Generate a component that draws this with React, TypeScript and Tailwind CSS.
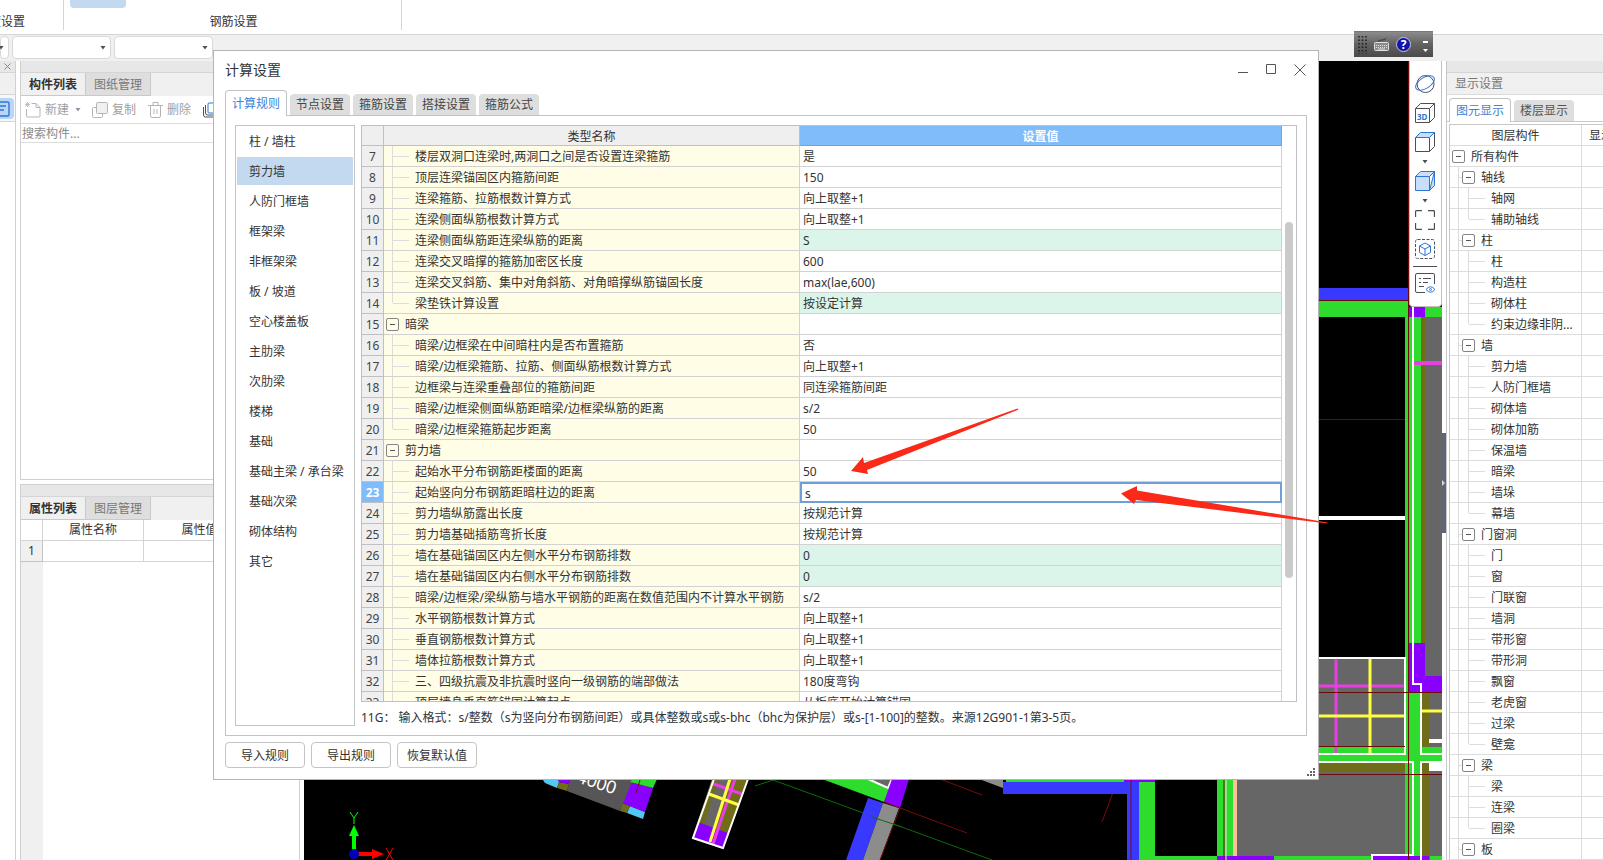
import type { ReactNode } from "react";

type Row = { no: number; name: string; value?: string; group?: boolean; last?: boolean; mark?: boolean };

const rows: Row[] = [
  { no: 7, name: "楼层双洞口连梁时,两洞口之间是否设置连梁箍筋", value: "是" },
  { no: 8, name: "顶层连梁锚固区内箍筋间距", value: "150" },
  { no: 9, name: "连梁箍筋、拉筋根数计算方式", value: "向上取整+1" },
  { no: 10, name: "连梁侧面纵筋根数计算方式", value: "向上取整+1" },
  { no: 11, name: "连梁侧面纵筋距连梁纵筋的距离", value: "S", mark: true },
  { no: 12, name: "连梁交叉暗撑的箍筋加密区长度", value: "600" },
  { no: 13, name: "连梁交叉斜筋、集中对角斜筋、对角暗撑纵筋锚固长度", value: "max(lae,600)" },
  { no: 14, name: "梁垫铁计算设置", value: "按设定计算", mark: true, last: true },
  { no: 15, name: "暗梁", group: true },
  { no: 16, name: "暗梁/边框梁在中间暗柱内是否布置箍筋", value: "否" },
  { no: 17, name: "暗梁/边框梁箍筋、拉筋、侧面纵筋根数计算方式", value: "向上取整+1" },
  { no: 18, name: "边框梁与连梁重叠部位的箍筋间距", value: "同连梁箍筋间距" },
  { no: 19, name: "暗梁/边框梁侧面纵筋距暗梁/边框梁纵筋的距离", value: "s/2" },
  { no: 20, name: "暗梁/边框梁箍筋起步距离", value: "50", last: true },
  { no: 21, name: "剪力墙", group: true },
  { no: 22, name: "起始水平分布钢筋距楼面的距离", value: "50" },
  { no: 23, name: "起始竖向分布钢筋距暗柱边的距离", value: "s" },
  { no: 24, name: "剪力墙纵筋露出长度", value: "按规范计算" },
  { no: 25, name: "剪力墙基础插筋弯折长度", value: "按规范计算" },
  { no: 26, name: "墙在基础锚固区内左侧水平分布钢筋排数", value: "0", mark: true },
  { no: 27, name: "墙在基础锚固区内右侧水平分布钢筋排数", value: "0", mark: true },
  { no: 28, name: "暗梁/边框梁/梁纵筋与墙水平钢筋的距离在数值范围内不计算水平钢筋", value: "s/2" },
  { no: 29, name: "水平钢筋根数计算方式", value: "向上取整+1" },
  { no: 30, name: "垂直钢筋根数计算方式", value: "向上取整+1" },
  { no: 31, name: "墙体拉筋根数计算方式", value: "向上取整+1" },
  { no: 32, name: "三、四级抗震及非抗震时竖向一级钢筋的端部做法", value: "180度弯钩" },
  { no: 33, name: "顶层墙身垂直筋锚固计算起点", value: "从板底开始计算锚固" },
];

const ACTIVE_ROW = 23;

const categories = [
  "柱 / 墙柱",
  "剪力墙",
  "人防门框墙",
  "框架梁",
  "非框架梁",
  "板 / 坡道",
  "空心楼盖板",
  "主肋梁",
  "次肋梁",
  "楼梯",
  "基础",
  "基础主梁 / 承台梁",
  "基础次梁",
  "砌体结构",
  "其它",
];

const dialogTabs = ["计算规则", "节点设置", "箍筋设置", "搭接设置", "箍筋公式"];

const layers = [
  { name: "轴线", items: ["轴网", "辅助轴线"] },
  { name: "柱", items: ["柱", "构造柱", "砌体柱", "约束边缘非阴..."] },
  { name: "墙", items: ["剪力墙", "人防门框墙", "砌体墙", "砌体加筋", "保温墙", "暗梁", "墙垛", "幕墙"] },
  { name: "门窗洞", items: ["门", "窗", "门联窗", "墙洞", "带形窗", "带形洞", "飘窗", "老虎窗", "过梁", "壁龛"] },
  { name: "梁", items: ["梁", "连梁", "圈梁"] },
  { name: "板", items: [] },
];

function Caret({ className = "" }: { className?: string }) {
  return (
    <svg width="6" height="4" viewBox="0 0 6 4" className={className} aria-hidden="true">
      <path d="M.5 0h5L3 3.500z" fill="#4b5058" />
    </svg>
  );
}

function ToggleBox() {
  return (
    <button
      aria-label="折叠"
      className="flex size-[13px] shrink-0 items-center justify-center rounded-[2px] border border-[#858585]"
    >
      <span className="h-px w-[5px] bg-[#555]" />
    </button>
  );
}

function Branch({ last }: { last?: boolean }) {
  return (
    <>
      <span className={`w-px shrink-0 self-start bg-[#dcdcdc] ${last ? "h-1/2" : "h-full"}`} />
      <span className="h-px w-4 shrink-0 bg-[#dcdcdc]" />
    </>
  );
}

function Ribbon() {
  return (
    <header className="flex h-[35px] shrink-0 border-b border-[#d5d5d5] bg-white leading-4">
      <div className="mb-1 flex w-16 items-end justify-end overflow-hidden border-r border-[#d5d5d5] pr-[38px]">
        <span className="whitespace-nowrap">度设置</span>
      </div>
      <div className="mb-1 flex w-[338px] flex-col justify-between border-r border-[#d5d5d5]">
        <button aria-label="计算设置" className="ml-1.5 h-2 w-14 rounded-b bg-[#c2d9f0]" />
        <span className="pl-0.5 text-center">钢筋设置</span>
      </div>
    </header>
  );
}

function Combo({ label, className }: { label: string; className: string }) {
  return (
    <div className={`relative h-[23px] ${className}`}>
      <select aria-label={label} className="size-full appearance-none rounded border border-[#d9d9d9] bg-white" />
      <Caret className="pointer-events-none absolute right-[5px] top-[10px]" />
    </div>
  );
}

function DockTabs({ tabs }: { tabs: [string, string] }) {
  return (
    <>
      <div className="h-3 shrink-0 border-b border-[#d5d5d5] bg-[#e7e7e7]" />
      <div role="tablist" className="flex h-[23px] shrink-0 bg-[#f0f0f0]">
        <button role="tab" aria-selected="true" className="w-[65px] border-r border-b border-[#c9c9c9] bg-[#f0f0f0] pt-px font-bold">
          {tabs[0]}
        </button>
        <button role="tab" aria-selected="false" className="w-[65px] border-r border-b border-[#c9c9c9] bg-[#dedede] pt-px text-[#777]">
          {tabs[1]}
        </button>
      </div>
    </>
  );
}

function LeftDock() {
  return (
    <aside className="flex w-[304px] shrink-0 bg-white">
      <div className="mr-1 flex w-4 shrink-0 flex-col border-r border-[#d0d0d0]">
        <div className="flex h-3 items-center justify-center border-b border-[#d5d5d5] bg-[#e7e7e7]">
          <button aria-label="关闭">
            <svg width="7" height="7" viewBox="0 0 7 7" stroke="#8a8a8a">
              <path d="M.5.5l6 6M6.500.5l-6 6" />
            </svg>
          </button>
        </div>
        <div className="h-[22px] border-b border-[#d5d5d5] bg-[#f0f0f0]" />
        <div className="h-[27px] border-b border-[#d5d5d5] bg-[#f7f7f7] pt-[3px]">
          <button aria-label="列表" className="flex h-[21px] w-[14px] items-center rounded-r bg-[#b9d6f8]">
            <svg width="10" height="16" viewBox="0 0 10 16" fill="none" stroke="#2f76d2" strokeWidth="1.4">
              <path d="M0 1h7.500q1.500 0 1.500 1.500v11q0 1.500-1.500 1.500H0M0 5h6M0 9h4" />
            </svg>
          </button>
        </div>
      </div>

      <div className="flex min-w-0 flex-1 flex-col">
        <section className="flex h-[419px] shrink-0 flex-col border border-t-0 border-[#d0d0d0]">
          <DockTabs tabs={["构件列表", "图纸管理"]} />
          <div className="flex h-7 shrink-0 items-center border-b border-[#dcdcdc] pl-1 text-[#a0a0a0]">
            <button className="flex items-center gap-1 pt-px">
              <svg width="16" height="16" viewBox="0 0 16 16" fill="none" stroke="#b5b5b5">
                <path d="M6.500 1.500H11l4 4v8.500q0 1-1 1H2.500q-1 0-1-1V7M11 1.500v4h4" />
                <path d="M2.500 0v5M0 2.500h5M.5.5l4 4M4.500.5l-4 4" strokeWidth=".8" />
              </svg>
              新建
              <Caret className="ml-0.5 opacity-60" />
            </button>
            <button className="ml-[11px] flex items-center gap-1 pt-px">
              <svg width="16" height="16" viewBox="0 0 16 16" stroke="#b5b5b5">
                <rect x=".5" y="5.500" width="10" height="10" rx="1" fill="#fff" />
                <rect x="4.500" y=".5" width="11" height="11" rx="1" fill="#f0f0f0" />
              </svg>
              复制
            </button>
            <button className="ml-3 flex items-center gap-1 pt-px">
              <svg width="15" height="16" viewBox="0 0 15 16" fill="none" stroke="#b5b5b5">
                <path d="M0 3.500h15M5 3.500v-3h5v3M2.500 3.500v10.500q0 1.500 1.500 1.500h7q1.500 0 1.500-1.500V3.500M6 7v5M9 7v5" />
              </svg>
              删除
            </button>
            <button aria-label="层间复制" className="ml-3">
              <svg width="16" height="16" viewBox="0 0 16 16" fill="none">
                <path d="M.5 5v8q0 2 2 2h8M2.500 3v8q0 2 2 2h8" stroke="#4b5058" />
                <rect x="5" y="1" width="10" height="10" rx="1" stroke="#2f76d2" />
              </svg>
            </button>
          </div>
          <input
            aria-label="搜索构件"
            placeholder="搜索构件..."
            className="h-[19px] shrink-0 border-b border-[#dcdcdc] px-px pt-px placeholder:text-[#8a8a8a] focus:outline-none"
          />
        </section>

        <section className="mt-1 flex min-h-0 flex-1 flex-col border-x border-t border-[#d0d0d0] bg-[linear-gradient(to_right,#f0f0f0_22px,#fff_22px)]">
          <DockTabs tabs={["属性列表", "图层管理"]} />
          <table className="w-full table-fixed border-separate border-spacing-0 bg-white text-center">
            <colgroup>
              <col className="w-[22px]" />
              <col className="w-[101px]" />
              <col className="w-[112px]" />
              <col />
            </colgroup>
            <tbody>
              <tr className="h-[21px]">
                <th className="border-r border-b border-[#d5d5d5]" />
                <th className="border-r border-b border-[#d5d5d5] font-normal">属性名称</th>
                <th className="border-r border-b border-[#d5d5d5] font-normal">属性值</th>
                <th className="border-b border-[#d5d5d5]" />
              </tr>
              <tr className="h-[21px]">
                <td className="border-r border-b border-[#c4c4c4] bg-[#f0f0f0]">1</td>
                <td className="border-r border-b border-[#d5d5d5]" />
                <td className="border-r border-b border-[#d5d5d5]" />
                <td className="border-b border-[#d5d5d5]" />
              </tr>
            </tbody>
          </table>
        </section>
      </div>
      <div className="w-1 shrink-0" />
    </aside>
  );
}

// Model view: walls, beams and columns drawn in drawing coordinates
function ModelView() {
  return (
    <svg
      viewBox="304 61 1138 799"
      preserveAspectRatio="xMaxYMax slice"
      className="absolute inset-0 size-full"
      aria-label="模型"
    >
      <rect x="304" y="61" width="1138" height="799" fill="#000" />

      {/* axis */}
      <path d="M352 850v-14h-3l5-11 5 11h-3v14z" fill="#0f0" />
      <path d="M358 852h14v-3l12 5-12 5v-3h-14z" fill="#f00" />
      <circle cx="354" cy="854" r="5" fill="#0000b8" />
      <path d="M350 812l4 6 4-6M354 818v6" stroke="#0f0" fill="none" />
      <path d="M386 848l7 12M393 848l-7 12" stroke="#f00" fill="none" />

      {/* tilted slab */}
      <path d="M543 780l2 3 12 5 2-6v-2zM630 806l15 6-2 7-16-6z" fill="#53c8f5" />
      <path d="M559 782l10 2-2 7-10-3zM622 803l8 3-3 7-7-2z" fill="#6f6d17" />
      <path d="M557 779h13l-1 5-10-2zM630 782l23 6-8 24-23-9z" fill="#8a00ff" />
      <path d="M570 779h63l-13 32-53-20z" fill="#575555" />
      <path d="M633 779h24l-4 9-23-6z" fill="#2ddc2d" />
      <path d="M640 780l-4 13" stroke="#7a0c0c" />
      <text transform="translate(576 782) rotate(18)" fontSize="18" fill="#fff" fontFamily="Liberation Sans, sans-serif">
        4000
      </text>

      {/* tilted column */}
      <path d="M692 838l31 11 25-70h-36z" fill="#6f6d17" />
      <path d="M718 779h12l-16 50-10-4z" fill="#666" />
      <path d="M698 822l30 11-5 16-31-11z" fill="#8a00ff" />
      <path d="M735 779l-22 65M711 783l31 11" stroke="#e840e0" strokeWidth="3" />
      <path d="M730 779l-20 63M709 794l30 11" stroke="#ffff40" strokeWidth="3" />
      <path d="M714 779l-21 59 30 10 25-69" stroke="#fff" strokeWidth="2" fill="none" />

      <path d="M755 786l18-6 219 80" stroke="#0b6b0b" fill="none" />
      <path d="M822 779h72l-10 23z" fill="#2ddc2d" />
      <path d="M868 779h24l-4 9z" fill="#666" stroke="#fff" strokeWidth="2" />
      <path d="M892 779h17l-9 29-16-6z" fill="#8a00ff" />
      <path d="M868 798l15 5-20 57h-17z" fill="#3838ff" />
      <path d="M883 803l16 5-19 52h-17z" fill="#8c8c8c" />
      <path d="M940 779l42 16M884 802l83 31M900 808l-20 52M1118 779l-16 43" stroke="#7a0c0c" fill="none" />
      <path d="M872 817l30 10" stroke="#0b6b0b" />

      {/* lower walls */}
      <path d="M979 779h24v9z" fill="#8c8c8c" />
      <path d="M1006 779h118v4h-118zM1139 782h16v78h-16zM1139 856h303v4h-303zM1217 779h16v81h-16z" fill="#2ddc2d" />
      <path d="M1124 779h31v3h-31zM1217 856h57v4h-57z" fill="#8a00ff" />
      <path d="M1003 782h136v78h-12v-66h-124z" fill="#3838ff" />
      <path d="M1131 779v81M1224 779v81" stroke="#7a0c0c" />
      <path d="M1226 779v81" stroke="#eee" />
      <path d="M1233 779h4v77h-4z" fill="#f7c29a" />
      <path d="M1237 763h168v93h-168z" fill="#666" />

      {/* upper right bay */}
      <path d="M1319 288h89v12h-89z" fill="#3838ff" />
      <path d="M1319 301h90v16h-90z" fill="#2ddc2d" />
      <path d="M1319 516h86v4h-86z" fill="#fff" />
      <path d="M1319 657h86v98h-86z" fill="#666" />
      <path d="M1319 747h123v14h-123z" fill="#2ddc2d" />
      <path d="M1319 763h86v8h-86z" fill="#6f6d17" />
      <path d="M1336 657v97M1319 686h86" stroke="#e840e0" strokeWidth="3" />
      <path d="M1370 657v97M1319 716h86" stroke="#ffff40" strokeWidth="3" />

      {/* right edge column */}
      <path d="M1405 307h37v553h-37z" fill="#2ddc2d" />
      <path d="M1421 317h4v360h-4zM1422 692h8v55h-8zM1422 763h8v97h-8z" fill="#6f6d17" />
      <path d="M1425 317h17v360h-17zM1429 692h13v55h-13zM1429 763h13v93h-13z" fill="#666" />
      <path d="M1409 307h16v10h-16zM1409 643h16v33h17v16h-33zM1372 856h57v4h-57z" fill="#8a00ff" />
      <path d="M1414 363h28" stroke="#e840e0" strokeWidth="4" />
      <path d="M1421 711h21" stroke="#ffff40" strokeWidth="3" />
      <path d="M1429 739h13v4h-13zM1429 763h13v8h-13z" fill="#fff" />
      <g fill="none" stroke="#fff" strokeWidth="2">
        <path d="M1319 658h86v96h-86" />
        <path d="M1413 307v377h8v70h21" />
        <path d="M1319 762h94v93h-41v5M1442 762h-21v98" />
      </g>
      <path d="M1408.500 61v799M1319 300.500h90M1319 692.500h123M1319 746.500h86M1319 774.500h123M1319 419.500h86" stroke="#6b0808" fill="none" />
    </svg>
  );
}

function ToolButton({ label, children }: { label: string; children: ReactNode }) {
  return (
    <button aria-label={label} className="size-5">
      <svg width="20" height="20" viewBox="0 0 20 20" fill="none" stroke="#4b5058" strokeLinejoin="round">
        {children}
      </svg>
    </button>
  );
}

function ViewTools() {
  return (
    <div className="absolute top-0 right-0 flex h-[246px] w-[33px] flex-col items-center gap-[9px] rounded-b border border-t-0 border-[#c9bcbc] bg-white pt-[13px] pr-px">
      <ToolButton label="动态观察">
        <circle cx="10.500" cy="10" r="8.500" />
        <ellipse cx="10" cy="9" rx="10.500" ry="5.500" transform="rotate(-32 10 9)" stroke="#2f76d2" />
      </ToolButton>
      <ToolButton label="三维">
        <path d="M.5 5.500h14V19.500H.5zM.5 5.500L5.500.5h14l-5 5M19.500.5v14l-5 5" />
        <text x="2" y="17" fontSize="8" fontWeight="bold" fill="#2f76d2" stroke="none">3D</text>
      </ToolButton>
      <div className="flex flex-col items-center">
        <ToolButton label="俯视">
          <path d="M.5 5.500v14h14v-14M19.500.5v14l-5 5" />
          <path d="M.5 5.500L5.500.5h14l-5 5z" fill="#c9defa" stroke="#2f76d2" />
        </ToolButton>
        <button aria-label="更多视图" className="flex h-[19px] items-center"><Caret /></button>
        <ToolButton label="实体">
          <path d="M.5 5.500h14V19.500H.5zM.5 5.500L5.500.5h14l-5 5M19.500.5v14l-5 5z" fill="#c9defa" stroke="#2f76d2" />
        </ToolButton>
        <button aria-label="更多显示" className="flex h-[19px] items-center"><Caret /></button>
        <ToolButton label="全屏">
          <path d="M.5 7V2Q.5.5 2 .5h5M13 .5h5q1.500 0 1.500 1.500v5M19.500 13v5q0 1.500-1.500 1.500h-5M7 19.500H2Q.5 19.500.5 18v-5" strokeWidth="1.300" />
        </ToolButton>
      </div>
      <div className="flex flex-col items-center">
        <ToolButton label="局部三维">
          <rect x=".5" y=".5" width="19" height="19" rx="2" strokeDasharray="3 1.500" />
          <path d="M10 4l5.500 3v6.500L10 16.500l-5.500-3V7zM4.500 7l5.500 3 5.500-3M10 10v6.500" stroke="#2f76d2" />
        </ToolButton>
        <span className="mt-[7px] mb-1.5 h-px w-6 bg-[#4b5058]" />
        <ToolButton label="显示设置">
          <path d="M10 19.500H2Q.5 19.500.5 18V2Q.5.5 2 .5h16q1.500 0 1.500 1.500v9M4 5.500h2M8 5.500h8M4 9.500h2M8 9.500h5M4 13.500h5" />
          <path d="M11 16.500q4.500-5.500 9 0-4.500 5.500-9 0z" stroke="#2f76d2" />
          <circle cx="15.500" cy="16.500" r="1" stroke="#2f76d2" />
        </ToolButton>
      </div>
    </div>
  );
}

function LayerRow({ children }: { children: ReactNode }) {
  return (
    <tr className="h-[21px]">
      <td className="border-r border-b border-[#dcdcdc] p-0">
        <div className="flex h-5 items-center whitespace-nowrap">{children}</div>
      </td>
      <td className="border-b border-[#dcdcdc]" />
    </tr>
  );
}

function DisplayPanel() {
  return (
    <aside className="flex w-[161px] shrink-0 bg-white">
      <button aria-label="收起面板" className="mt-[372px] flex h-[100px] w-1 shrink-0 items-center bg-[#5f6773]">
        <svg width="4" height="6" viewBox="0 0 4 6"><path d="M0 0l3 3-3 3z" fill="#d5dae0" /></svg>
      </button>
      <div className="flex min-w-0 flex-1 flex-col overflow-hidden border-l border-[#c4c8cc]">
        <div className="h-3 shrink-0 border-b border-[#d5d5d5] bg-[#e7e7e7]" />
        <h2 className="h-[22px] shrink-0 border-b border-[#dcdcdc] bg-[#f0f0f0] pl-2 leading-[21px] text-[#777]">显示设置</h2>
        <div role="tablist" className="flex h-[27px] shrink-0 items-end gap-[3px] border-b border-[#c8c8c8] pl-0.5">
          <button role="tab" aria-selected="true" className="-mb-px h-6 w-[62px] rounded-t border border-b-0 border-[#c4c4c4] bg-white text-[#3d84d6]">
            图元显示
          </button>
          <button role="tab" aria-selected="false" className="h-[21px] w-[60px] rounded-t bg-[#dedede] text-[#555]">
            楼层显示
          </button>
        </div>
        <div className="mt-0.5 ml-0.5 overflow-hidden border-t border-l border-[#c8c8c8]">
          <table className="w-full table-fixed border-separate border-spacing-0">
            <thead>
              <tr className="h-[21px]">
                <th className="w-[132px] border-r border-b border-[#dcdcdc] p-0 pt-0.5 font-normal">图层构件</th>
                <th className="overflow-hidden border-b border-[#dcdcdc] p-0 pt-0.5 pl-[7px] text-left font-normal whitespace-nowrap">显示</th>
              </tr>
            </thead>
            <tbody>
              <LayerRow>
                <span className="ml-0.5 flex"><ToggleBox /></span>
                <span className="ml-1.5 pt-0.5">所有构件</span>
              </LayerRow>
              {layers.map((layer) => [
                <LayerRow key={layer.name}>
                  <span className="ml-2 h-full w-px bg-[#dcdcdc]" />
                  <span className="h-px w-[3px] bg-[#dcdcdc]" />
                  <ToggleBox />
                  <span className="ml-1.5 pt-0.5">{layer.name}</span>
                </LayerRow>,
                ...layer.items.map((item, i) => (
                  <LayerRow key={layer.name + item}>
                    <span className="ml-2 h-full w-px shrink-0 bg-[#dcdcdc]" />
                    <span className="w-[9px] shrink-0" />
                    <Branch last={i === layer.items.length - 1} />
                    <span className="ml-1.5 pt-0.5">{item}</span>
                  </LayerRow>
                )),
              ])}
            </tbody>
          </table>
        </div>
      </div>
    </aside>
  );
}

function LanguageBar() {
  return (
    <div className="absolute top-[31px] right-[170px] flex h-[26px] w-[79px] items-center border-t border-[#777] bg-gradient-to-b from-[#8b8b8b] via-[#626262] to-[#4a4a4a] pl-1">
      <svg width="9" height="18" viewBox="0 0 9 18" stroke="#1c1c1c" strokeWidth="1.500" strokeDasharray="1.500 2">
        <path d="M1 0v18M4.500 0v18M8 0v18" />
      </svg>
      <svg width="15" height="13" viewBox="0 0 15 13" fill="none" stroke="#e0e0e0" className="ml-[7px]">
        <rect x=".5" y="4.500" width="14" height="8" rx="1" fill="#8a8a8a" />
        <path d="M2 7.500h11M2 9.500h11" strokeDasharray="1 1" />
        <path d="M4 11h7" />
        <path d="M4 4q0-2 4-2t4-2" stroke="#3a3a3a" />
      </svg>
      <button aria-label="帮助" className="ml-[7px] size-[15px] rounded-full border border-[#c8c8e8] bg-[#1414a8] text-xs leading-3 font-bold text-white">
        ?
      </button>
      <svg width="8" height="16" viewBox="0 0 8 16" fill="#fff" className="ml-2.5">
        <path d="M2 4h5v2H2zM2 12h5l-2.500 3z" />
      </svg>
    </div>
  );
}

function RuleTable() {
  return (
    <div className="flex min-h-0 flex-1 overflow-hidden border border-[#c0c0c4]">
      <div className="min-w-0 flex-1">
        <table className="w-full table-fixed border-separate border-spacing-0">
          <colgroup>
            <col className="w-[22px]" />
            <col className="w-[416px]" />
            <col />
          </colgroup>
          <thead>
            <tr className="h-5">
              <th className="border-r border-b border-[#c0c0c4] bg-[#efefef] p-0" />
              <th className="border-r border-b border-[#c0c0c4] bg-[#efefef] p-0 pt-0.5 font-normal">类型名称</th>
              <th className="border-r border-b border-[#6da3e0] bg-[#80bbfa] p-0 pt-0.5 font-bold text-white">设置值</th>
            </tr>
          </thead>
          <tbody>
            {rows.map((row) => (
              <tr key={row.no} className="h-[21px]">
                <td
                  className={`border-r border-b border-[#c0c0c4] p-0 pt-0.5 text-center ${
                    row.no === ACTIVE_ROW ? "bg-[#80bbfa] font-bold text-white" : "bg-[#efefef] text-[#444]"
                  }`}
                >
                  {row.no}
                </td>
                <td className="border-r border-b border-[#d2d2d2] bg-[#fffde6] p-0">
                  <div className={`flex h-5 items-center whitespace-nowrap ${row.group ? "pl-0.5" : "pl-2"}`}>
                    {row.group ? <ToggleBox /> : <Branch last={row.last} />}
                    <span className="ml-1.5 pt-0.5">{row.name}</span>
                  </div>
                </td>
                {row.no === ACTIVE_ROW ? (
                  <td className="p-0">
                    <input
                      aria-label={row.name}
                      defaultValue={row.value}
                      className="block h-[21px] w-full border-2 border-[#6f9fd4] bg-white px-[3px] pt-0.5 focus:outline-none"
                    />
                  </td>
                ) : (
                  <td className={`border-r border-b border-[#d2d2d2] p-0 pt-0.5 pl-[3px] ${row.mark ? "bg-[#dcf5ea]" : "bg-white"}`}>
                    {row.value}
                  </td>
                )}
              </tr>
            ))}
          </tbody>
        </table>
      </div>
      <div className="w-[14px] shrink-0 pt-24">
        <div className="ml-[3px] h-[356px] w-2 rounded-full bg-[#cacaca]" />
      </div>
    </div>
  );
}

function SettingsDialog() {
  return (
    <div
      role="dialog"
      aria-label="计算设置"
      className="absolute top-[50px] right-[284px] bottom-20 left-[213px] flex flex-col border border-[#b4b4b4] bg-white px-[11px]"
    >
      <div className="flex h-[39px] shrink-0 items-center justify-between pb-0.5">
        <h1 className="text-sm">计算设置</h1>
        <div className="flex gap-[17px] pr-px">
          <button aria-label="最小化">
            <svg width="11" height="11" viewBox="0 0 11 11" stroke="#555"><path d="M0 8.500h10" /></svg>
          </button>
          <button aria-label="最大化">
            <svg width="11" height="11" viewBox="0 0 11 11" fill="none" stroke="#555"><path d="M.5.5h9v9h-9z" /></svg>
          </button>
          <button aria-label="关闭">
            <svg width="12" height="12" viewBox="0 0 12 12" stroke="#555"><path d="M.5.5l11 11M11.500.5l-11 11" /></svg>
          </button>
        </div>
      </div>

      <div role="tablist" className="flex h-[26px] shrink-0 items-end gap-[3px] border-b border-[#c0c4c8]">
        {dialogTabs.map((tab, i) => (
          <button
            key={tab}
            role="tab"
            aria-selected={i === 0}
            className={
              i === 0
                ? "-mb-px h-[26px] w-[62px] rounded-t border border-b-0 border-[#c0c4c8] bg-white text-[#3d84d6]"
                : "h-[21px] w-[60px] rounded-t bg-[#dedede] text-[#444]"
            }
          >
            {tab}
          </button>
        ))}
      </div>

      <div className="flex min-h-0 flex-1 gap-[6px] border border-t-0 border-[#c0c4c8] p-[9px]">
        <ul className="flex w-[120px] shrink-0 flex-col gap-0.5 border border-[#c4c4c4] p-px">
          {categories.map((name) => (
            <li key={name}>
              <button className={`h-7 w-full pt-0.5 pl-3 text-left whitespace-nowrap ${name === "剪力墙" ? "bg-[#c2d9f0]" : ""}`}>
                {name}
              </button>
            </li>
          ))}
        </ul>
        <div className="flex min-w-0 flex-1 flex-col">
          <RuleTable />
          <p className="h-6 shrink-0 pt-1.5 leading-5 whitespace-nowrap">
            11G： 输入格式：s/整数（s为竖向分布钢筋间距）或具体整数或s或s-bhc（bhc为保护层）或s-[1-100]的整数。来源12G901-1第3-5页。
          </p>
        </div>
      </div>

      <div className="flex h-[43px] shrink-0 gap-1.5 pt-1.5">
        {["导入规则", "导出规则", "恢复默认值"].map((label) => (
          <button key={label} className="h-[26px] w-20 rounded border border-[#c4c4c4] bg-white pt-px">
            {label}
          </button>
        ))}
      </div>
      <svg width="9" height="9" viewBox="0 0 9 9" fill="#666" className="absolute right-0.5 bottom-0.5" aria-hidden="true">
        <path d="M6 0h2v2H6zM3 3h2v2H3zM6 3h2v2H6zM0 6h2v2H0zM3 6h2v2H3zM6 6h2v2H6z" />
      </svg>
    </div>
  );
}

export default function App() {
  return (
    <div className='relative flex h-screen flex-col overflow-hidden bg-white font-["Noto_Sans","Noto_Sans_CJK_SC",sans-serif] text-xs text-[#333]'>
      <Ribbon />
      <div className="flex h-[26px] shrink-0 items-start gap-[3px] bg-[#f0f0f0] pt-px">
        <Combo label="楼层" className="w-[9px]" />
        <Combo label="构件类型" className="w-[99px]" />
        <Combo label="构件" className="w-[99px]" />
      </div>
      <div className="flex min-h-0 flex-1">
        <LeftDock />
        <main className="relative min-w-0 flex-1 overflow-hidden bg-black">
          <ModelView />
          <ViewTools />
        </main>
        <DisplayPanel />
      </div>

      <LanguageBar />
      <SettingsDialog />

      {/* annotation arrows */}
      <svg className="pointer-events-none absolute inset-0 size-full" fill="#fb2a18" aria-hidden="true">
        <path d="M851 471l12-14 1 6 153.500-54.500 1 1L867 470l1 4z" />
        <path d="M1121 493.500l16-7.500v4.500l190.500 32v1L1136 500l-2 4z" />
      </svg>
    </div>
  );
}
